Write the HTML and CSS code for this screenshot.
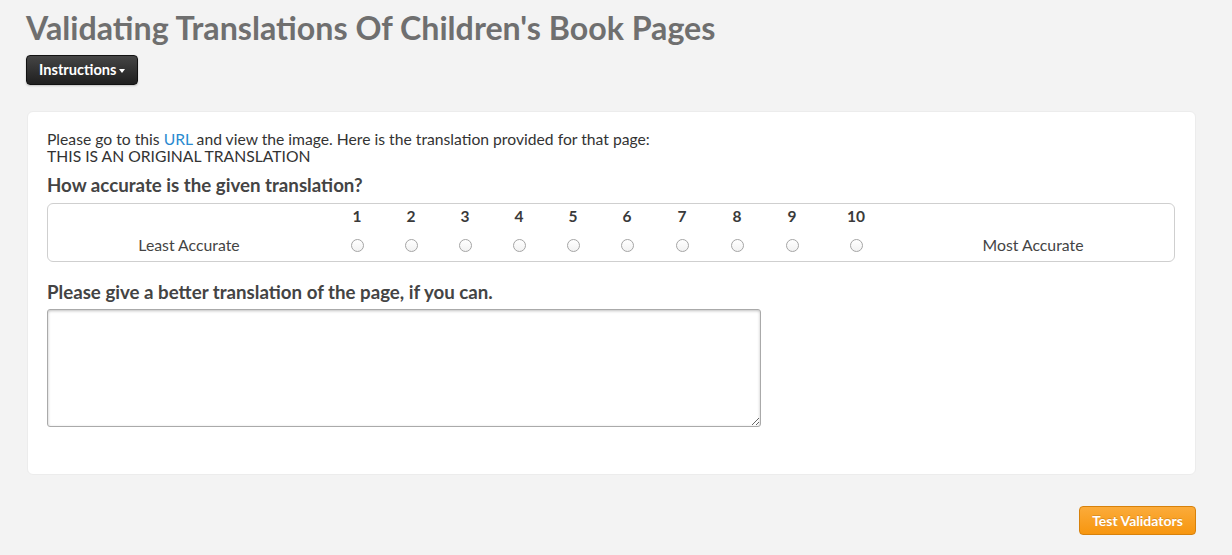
FILE: index.html
```html
<!DOCTYPE html>
<html>
<head>
<meta charset="utf-8">
<link rel="stylesheet" href="styles.css">
</head>
<body>
<div class="page">
  <h1 class="title">Validating Translations Of Children's Book Pages</h1>
  <button class="btn-instructions">Instructions <span class="caret"></span></button>
  <div class="card">
    <p class="intro">Please go to this <a href="#">URL</a> and view the image. Here is the translation provided for that page:<br>THIS IS AN ORIGINAL TRANSLATION</p>
    <h3 class="q">How accurate is the given translation?</h3>
    <div class="scale">
      <div class="cell"></div>
      <div class="cell num">1</div><div class="cell num">2</div><div class="cell num">3</div><div class="cell num">4</div><div class="cell num">5</div><div class="cell num">6</div><div class="cell num">7</div><div class="cell num">8</div><div class="cell num">9</div><div class="cell num">10</div>
      <div class="cell"></div>
      <div class="cell opt label">Least Accurate</div>
      <div class="cell opt"><span class="radio"></span></div><div class="cell opt"><span class="radio"></span></div><div class="cell opt"><span class="radio"></span></div><div class="cell opt"><span class="radio"></span></div><div class="cell opt"><span class="radio"></span></div><div class="cell opt"><span class="radio"></span></div><div class="cell opt"><span class="radio"></span></div><div class="cell opt"><span class="radio"></span></div><div class="cell opt"><span class="radio"></span></div><div class="cell opt"><span class="radio"></span></div>
      <div class="cell opt label">Most Accurate</div>
    </div>
    <h3 class="q q2">Please give a better translation of the page, if you can.</h3>
    <textarea class="answer"></textarea>
  </div>
  <div class="actions">
    <button class="btn-submit">Test Validators</button>
  </div>
</div>
</body>
</html>
```
FILE: styles.css
```css
html, body {
  margin: 0;
  padding: 0;
  background: #f3f3f3;
  font-family: Lato, "Open Sans", sans-serif;
  color: #333;
}
.page {
  padding: 0 36px 20px 26px;
}
.title {
  margin: 0;
  padding-top: 9px;
  font-size: 32.2px;
  line-height: 38px;
  font-weight: 700;
  color: #6f6f6f;
}
.btn-instructions {
  display: block;
  margin-top: 8px;
  height: 30px;
  width: 112px;
  padding: 0 0 1px;
  border: 1px solid #111;
  border-radius: 4px;
  background: linear-gradient(#454545, #1f1f1f);
  color: #fff;
  font-family: Lato, sans-serif;
  font-weight: 700;
  font-size: 14.6px;
  box-shadow: 0 1px 2px rgba(0,0,0,0.2);
}
.caret {
  display: inline-block;
  width: 0;
  height: 0;
  border-left: 3.5px solid transparent;
  border-right: 3.5px solid transparent;
  border-top: 4px solid #fff;
  vertical-align: middle;
  margin-left: -1px;
}
.card {
  margin-top: 26px;
  margin-left: 1px;
  background: #fff;
  border: 1px solid #ececec;
  border-radius: 6px;
  padding: 19px 20px 47px 19px;
}
.intro {
  margin: 0;
  font-size: 15.7px;
  line-height: 17px;
}
.intro a {
  color: #2a8ad0;
  text-decoration: none;
}
.q {
  margin: 9px 0 7px;
  font-size: 18.7px;
  line-height: 22px;
  font-weight: 700;
  color: #444;
}
.scale {
  display: grid;
  grid-template-columns: 282px 54px 54px 54px 54px 54px 54px 56px 54px 56px 72px 282px;
  grid-template-rows: 20px 35px;
  padding-top: 2px;
  border: 1px solid #cfcfcf;
  border-radius: 6px;
}
.cell {
  display: flex;
  align-items: center;
  justify-content: center;
  font-size: 15.8px;
  line-height: 20px;
}
.opt {
  align-items: flex-start;
  padding-top: 8px;
}
.num {
  font-weight: 700;
  font-size: 15.5px;
  color: #3a3a3a;
}
.label {
  color: #444;
  padding-top: 9px;
}
.radio {
  margin-top: 5px;
  width: 11px;
  height: 11px;
  border: 1px solid #a5a5a5;
  border-radius: 50%;
  background: linear-gradient(#fff, #f2f2f2);
}
.q2 {
  margin: 19px 0 6px;
}
.answer {
  display: block;
  box-sizing: border-box;
  width: 714px;
  height: 118px;
  border: 1px solid #aaa;
  border-radius: 3px;
  box-shadow: inset 0 1px 3px rgba(0,0,0,0.25);
  resize: both;
  margin: 0;
}
.actions {
  display: flex;
  justify-content: flex-end;
  margin-top: 31px;
}
.btn-submit {
  width: 117px;
  height: 29px;
  padding: 0;
  border: 1px solid #d7810b;
  border-radius: 4px;
  background: linear-gradient(#fbab3a, #f7960f);
  color: #fff;
  font-family: Lato, sans-serif;
  font-weight: 700;
  font-size: 14px;
  text-shadow: 0 -1px 0 rgba(0,0,0,0.15);
}
```
